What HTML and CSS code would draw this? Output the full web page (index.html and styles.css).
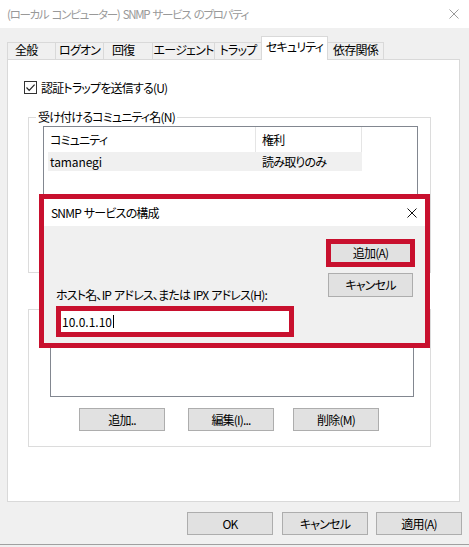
FILE: index.html
```html
<!DOCTYPE html>
<html lang="ja">
<head>
<meta charset="utf-8">
<title>SNMP</title>
<link rel="stylesheet" href="styles.css">
</head>
<body>
<div class="window">
  <div class="titlebar">
    <span class="title">(ローカル コンピューター) SNMP サービス のプロパティ</span>
    <svg class="close" width="10" height="10" viewBox="0 0 10 10"><path d="M0.5 0.5 L9.5 9.5 M9.5 0.5 L0.5 9.5" stroke="#9a9a9a" stroke-width="1" fill="none"/></svg>
  </div>
  <div class="tabs">
    <div class="tab w1">全般</div>
    <div class="tab w2">ログオン</div>
    <div class="tab w3">回復</div>
    <div class="tab w4">エージェント</div>
    <div class="tab w5">トラップ</div>
    <div class="tab active">セキュリティ</div>
    <div class="tab w7">依存関係</div>
  </div>
  <div class="panel">
    <div class="check">
      <span class="box"><svg width="11" height="11" viewBox="0 0 11 11"><path d="M1.5 5.5 L4.2 8.3 L9.6 2.6" stroke="#222" stroke-width="1.2" fill="none"/></svg></span>
      <span>認証トラップを送信する(U)</span>
    </div>
    <div class="group g1">
      <span class="legend">受け付けるコミュニティ名(N)</span>
      <div class="list list1">
        <div class="lv-head"><span class="c1">コミュニティ</span><span class="c2">権利</span></div>
        <div class="lv-row"><span class="c1">tamanegi</span><span class="c2">読み取りのみ</span></div>
      </div>
    </div>
    <div class="group g2">
      <div class="list list2"></div>
      <div class="btnrow">
        <div class="btn b1">追加..</div>
        <div class="btn b2">編集(I)...</div>
        <div class="btn b3">削除(M)</div>
      </div>
    </div>
  </div>
  <div class="footer">
    <div class="btn">OK</div>
    <div class="btn">キャンセル</div>
    <div class="btn apply">適用(A)</div>
  </div>
  <div class="bottomline"></div>

  <div class="dialog">
    <div class="dlg-title">
      <span>SNMP サービスの構成</span>
      <svg class="dlg-close" width="10" height="10" viewBox="0 0 10 10"><path d="M0.5 0.5 L9.5 9.5 M9.5 0.5 L0.5 9.5" stroke="#111" stroke-width="1" fill="none"/></svg>
    </div>
    <div class="dlg-body">
      <div class="dlg-left">
        <div class="dlg-label">ホスト名、IP アドレス、または IPX アドレス(H):</div>
        <div class="redbox input-box">
          <div class="input"><span class="latin">10.0.1.10</span><span class="caret"></span></div>
        </div>
      </div>
      <div class="dlg-right">
        <div class="redbox add-box"><div class="add-btn">追加(A)</div></div>
        <div class="btn dlg-cancel">キャンセル</div>
      </div>
    </div>
  </div>
</div>
</body>
</html>
```

FILE: styles.css
```css
* { box-sizing: border-box; }
html, body {
  margin: 0;
  padding: 0;
}
body {
  width: 469px;
  height: 547px;
  overflow: hidden;
  background: #f0f0f0;
  font-family: "Noto Sans CJK JP", "Noto Sans", sans-serif;
  font-size: 12px;
  font-feature-settings: "palt";
  letter-spacing: -0.8px;
  color: #000;
}
.window {
  position: relative;
  width: 469px;
  height: 547px;
}
.latin { letter-spacing: 0; }
.titlebar {
  height: 28px;
  background: #fff;
  display: flex;
  align-items: center;
  justify-content: space-between;
  padding: 0 10px 0 7px;
  color: #999;
  line-height: 16px;
}
.title {
  font-size: 11.5px;
  letter-spacing: -1.3px;
  word-spacing: 2px;
}
.tabs {
  height: 31px;
  display: flex;
  align-items: flex-end;
  padding-left: 7px;
}
.tab {
  height: 17px;
  border-top: 1px solid #d9d9d9;
  border-left: 1px solid #d9d9d9;
  line-height: 14px;
  text-align: center;
  white-space: nowrap;
}
.w1 { width: 48px; text-align: left; padding-left: 7px; }
.w2 { width: 48px; }
.w3 { width: 49px; text-align: left; padding-left: 8px; }
.w4 { width: 62px; }
.w5 { width: 47px; }
.w7 { width: 56px; border-left: none; border-right: 1px solid #d9d9d9; }
.tab.active {
  position: relative;
  z-index: 1;
  width: 67px;
  height: 24px;
  margin-bottom: -1px;
  background: #fff;
  border-right: 1px solid #d9d9d9;
  line-height: 20px;
}
.panel {
  margin-left: 7px;
  width: 453px;
  height: 443px;
  background: #fff;
  border: 1px solid #d9d9d9;
  display: flex;
  flex-direction: column;
  align-items: flex-start;
}
.check {
  margin: 21px 0 0 16px;
  height: 13px;
  display: flex;
  align-items: center;
  gap: 4px;
  line-height: 16px;
}
.box {
  width: 13px;
  height: 13px;
  border: 1px solid #333;
  display: flex;
  align-items: center;
  justify-content: center;
  background: #fff;
}
.group {
  margin-left: 20px;
  width: 403px;
  border: 1px solid #dcdcdc;
  display: flex;
  flex-direction: column;
  align-items: flex-start;
}
.g1 {
  margin-top: 23px;
  height: 156px;
}
.legend {
  margin: -9px 0 0 7px;
  padding: 0 2px;
  background: #fff;
  line-height: 16px;
}
.list {
  border: 1px solid #828790;
  background: #fff;
}
.list1 {
  margin: 1px 0 0 14px;
  width: 375px;
  height: 110px;
  padding-left: 4px;
}
.lv-head, .lv-row {
  display: flex;
}
.lv-head {
  height: 25px;
  line-height: 25px;
}
.lv-head span {
  border-right: 1px solid #e5e5e5;
}
.lv-row {
  height: 19px;
  line-height: 19px;
  width: 314px;
  background: #f0f0f0;
}
.lv-row .c1 { letter-spacing: -0.1px; }
.c1 { width: 208px; padding-left: 2px; }
.c2 { width: 106px; padding-left: 6px; }
.g2 {
  margin-top: 36px;
  height: 138px;
}
.list2 {
  margin: 8px 0 0 21px;
  width: 364px;
  height: 79px;
}
.btnrow {
  display: flex;
  margin-top: 11px;
}
.btn {
  height: 23px;
  width: 86px;
  background: #e1e1e1;
  border: 1px solid #adadad;
  display: flex;
  align-items: center;
  justify-content: center;
  line-height: 16px;
  white-space: nowrap;
}
.b1 { margin-left: 50px; }
.b2 { margin-left: 23px; }
.b3 { margin-left: 19px; }
.footer {
  display: flex;
  margin-top: 10px;
  padding-left: 187px;
  gap: 9px;
}
.footer .apply { margin-left: -1px; }
.bottomline {
  margin-top: 9px;
  height: 1px;
  background: #a0a0a0;
}
/* overlay dialog */
.dialog {
  position: absolute;
  left: 39px;
  top: 194px;
  width: 391px;
  height: 154px;
  border: 5px solid #c8102e;
  background: #f0f0f0;
  display: flex;
  flex-direction: column;
}
.dlg-title {
  height: 27px;
  background: #fff;
  display: flex;
  align-items: center;
  justify-content: space-between;
  padding: 0 8px 0 7px;
  line-height: 16px;
  word-spacing: 1px;
}
.dlg-body {
  flex: 1;
  display: flex;
  justify-content: space-between;
  padding: 13px 10px 6px 12px;
}
.dlg-left {
  display: flex;
  flex-direction: column;
  justify-content: flex-end;
  gap: 3px;
}
.dlg-label {
  line-height: 16px;
  word-spacing: 1px;
}
.redbox {
  border: 5px solid #c8102e;
}
.input-box {
  width: 238px;
  height: 31px;
}
.input {
  height: 21px;
  background: #fff;
  padding-left: 1px;
  display: flex;
  align-items: center;
  line-height: 16px;
}
.caret {
  display: inline-block;
  width: 1px;
  height: 13px;
  background: #000;
  margin-left: 1px;
}
.dlg-right {
  display: flex;
  flex-direction: column;
  align-items: center;
  gap: 6px;
}
.add-box {
  width: 89px;
  height: 28px;
}
.add-btn {
  height: 100%;
  background: #e1e1e1;
  display: flex;
  align-items: center;
  justify-content: center;
  line-height: 16px;
}
.dlg-cancel {
  width: 85px;
  height: 24px;
}
```
